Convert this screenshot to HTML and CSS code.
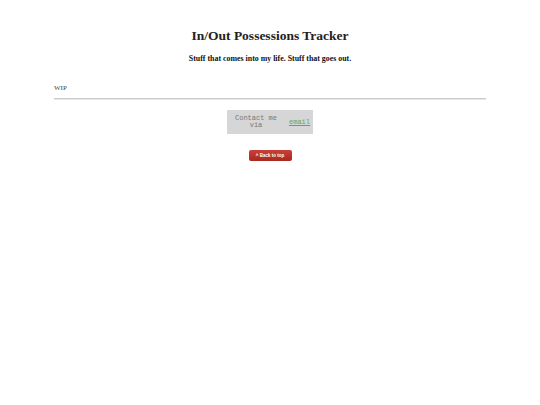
FILE: index.html
```html
<!DOCTYPE html>
<html>
<head>
<meta charset="utf-8">
<link rel="stylesheet" href="styles.css">
</head>
<body>
<header class="top">
  <h1 class="title">In/Out Possessions Tracker</h1>
  <p class="tagline">Stuff that comes into my life. Stuff that goes out.</p>
</header>
<main class="content">
  <p class="wip">WIP</p>
  <hr class="rule">
</main>
<footer class="foot">
  <div class="contact">
    <span class="contact-text">Contact me<br>via</span>
    <a class="contact-link" href="#">email</a>
  </div>
  <a class="totop" href="#">^ Back to top</a>
</footer>
</body>
</html>
```
FILE: styles.css
```css
html, body { margin: 0; padding: 0; background: #fff; }
body { font-family: "Liberation Serif", "Times New Roman", serif; color: #222; }
.top { text-align: center; padding-top: 27px; }
.title { margin: 0; font-size: 13.5px; font-weight: bold; line-height: 18px; color: #222; }
.tagline { margin: 9px 0 0; font-size: 7.9px; font-weight: bold; line-height: 10px; color: #111; }
.content { width: 432px; margin: 20px auto 0; }
.wip { margin: 0; font-size: 7px; line-height: 9px; color: #444; }
.rule { margin: 5px 0 0; border: 0; height: 1px; background: #ccc; border-bottom: 1px solid #e6e6e6; }
.foot { display: flex; flex-direction: column; align-items: center; margin-top: 10px; }
.contact { display: flex; align-items: center; gap: 12px; background: #d6d6d6; width: 86px; height: 24px; box-sizing: border-box; padding: 0 4px 0 8px; font-family: "Liberation Mono", "Courier New", monospace; font-size: 7px; line-height: 7px; color: #777; white-space: nowrap; }
.contact-text { text-align: center; }
.contact-link { color: #5aa85a; text-decoration: underline; margin-top: 1px; }
.totop { margin-top: 16px; display: block; background: #b8312c; background: linear-gradient(#c9403a, #a8281f); color: #fff; font-family: "Liberation Sans", Arial, sans-serif; font-size: 4.5px; font-weight: bold; line-height: 11px; width: 43px; text-align: center; border-radius: 2px; text-decoration: none; }
```
